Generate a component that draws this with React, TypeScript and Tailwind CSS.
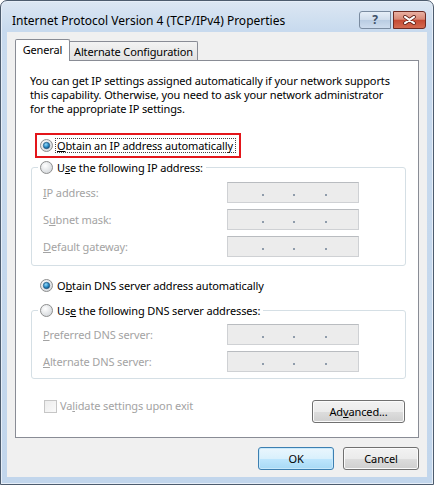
import type { ReactNode } from "react";

const font = { fontFamily: '"Noto Sans", "Open Sans", Arial, sans-serif' };

function Radio({ checked = false }: { checked?: boolean }) {
  const id = checked ? "rgOn" : "rgOff";
  return (
    <svg width="13" height="13" viewBox="0 0 13 13" className="shrink-0">
      <defs>
        <radialGradient id={id} cx="0.4" cy="0.35" r="0.75">
          <stop offset="0" stopColor="#ffffff" />
          <stop offset="1" stopColor="#cfd3d7" />
        </radialGradient>
        <radialGradient id="dot" cx="0.4" cy="0.35" r="0.7">
          <stop offset="0" stopColor="#9adaf8" />
          <stop offset="0.55" stopColor="#2b8ec8" />
          <stop offset="1" stopColor="#0d4a7a" />
        </radialGradient>
      </defs>
      <circle cx="6.5" cy="6.5" r="6" fill={`url(#${id})`} stroke="#8e8f8f" strokeWidth="1" />
      {checked && <circle cx="6.5" cy="6.5" r="3.2" fill="url(#dot)" stroke="#24557c" strokeWidth="0.7" />}
    </svg>
  );
}

function IpField() {
  return (
    <div className="flex h-[21px] w-[132px] items-end border border-[#cfd1d4] border-t-[#b9bcc0] bg-[#ececec] pb-[6px] pl-[34px]">
      <span className="h-[2px] w-[2px] bg-[#8f9cab]" />
      <span className="ml-[29px] h-[2px] w-[2px] bg-[#8f9cab]" />
      <span className="ml-[30px] h-[2px] w-[2px] bg-[#8f9cab]" />
    </div>
  );
}

function FieldRow({ label, first = false }: { label: ReactNode; first?: boolean }) {
  return (
    <div className={`flex items-center justify-between ${first ? "" : "mt-[6px]"}`}>
      <span className="text-[#a3a3a3]">{label}</span>
      <IpField />
    </div>
  );
}

function Btn({ children, primary = false, w }: { children: ReactNode; primary?: boolean; w: string }) {
  return (
    <div
      className={`flex h-[23px] ${w} items-center justify-center rounded-[3px] border ${
        primary
          ? "border-[#3c7fb1] bg-[linear-gradient(#eaf6fd_0%,#d9f0fc_50%,#bee6fd_51%,#a7d9f5_100%)] shadow-[inset_0_0_0_1px_#c8e9fb]"
          : "border-[#707070] bg-[linear-gradient(#f2f2f2_0%,#ebebeb_50%,#dddddd_51%,#cfcfcf_100%)] shadow-[inset_0_0_0_1px_#fbfbfb]"
      } text-black`}
    >
      {children}
    </div>
  );
}

export default function App() {
  return (
    <div className="h-[485px] w-[435px] bg-white text-[11px] leading-[14px] tracking-[-0.13px]" style={font}>
      <div className="flex h-[485px] w-[434px] flex-col rounded-t-[7px] border border-[#4d5c6e] bg-[linear-gradient(#dce7f3_0%,#c8daee_6%,#c2d6ec_100%)] shadow-[inset_0_0_0_1px_#e6eef8]">
        <div className="flex h-[31px] shrink-0 items-start justify-between pl-[11px] pr-[7px]">
          <span className="mt-[12px] text-[12px] leading-[15px] tracking-normal text-black">Internet Protocol Version 4 (TCP/IPv4) Properties</span>
          <div className="mt-[10px] flex">
            <div className="flex h-[18px] w-[32px] items-center justify-center rounded-l-[3px] border border-[#7a8ba0] bg-[linear-gradient(#e6eef7_0%,#cfdceb_50%,#b9cce2_51%,#cddcee_100%)] text-[12px] font-bold leading-none text-[#3e5068]">
              ?
            </div>
            <div className="ml-[2px] flex h-[18px] w-[33px] items-center justify-center rounded-r-[3px] border border-[#6e2a22] bg-[linear-gradient(#eab0a2_0%,#d88a77_45%,#c54a33_52%,#d46a50_100%)]">
              <svg width="13" height="10" viewBox="0 0 13 10">
                <path d="M2 1.8 L11 8.2 M11 1.8 L2 8.2" stroke="#5a1a12" strokeWidth="3.6" strokeLinecap="round" />
                <path d="M2 1.8 L11 8.2 M11 1.8 L2 8.2" stroke="#ffffff" strokeWidth="2.1" strokeLinecap="round" />
              </svg>
            </div>
          </div>
        </div>

        <div className="mx-[6px] mb-[7px] flex flex-1 flex-col bg-[#f0f0f0] px-[8px] pt-[7px]">
          <div className="flex h-[21px] items-end">
            <div className="relative z-10 -mb-px flex h-[22px] w-[55px] items-start justify-center rounded-t-[2px] border border-b-0 border-[#898c95] bg-white pt-[3px]">
              General
            </div>
            <div className="flex h-[19px] w-[128px] items-start justify-center whitespace-nowrap rounded-tr-[2px] border border-b-0 border-l-0 border-[#898c95] bg-[linear-gradient(#f3f3f3,#e2e2e2)] pt-[3px]">
              Alternate Configuration
            </div>
          </div>
          <div className="flex h-[378px] w-[404px] flex-col border border-[#898c95] bg-white pl-[14px] pr-[13px] pt-[13px]">
            <p className="pr-[10px] text-black">
              You can get IP settings assigned automatically if your network supports this capability. Otherwise, you need to ask your network administrator for the appropriate IP settings.
            </p>

            <div className="ml-[5px] mt-[17px] flex h-[25px] w-[206px] items-center border-2 border-[#e3151a] pl-[3px]">
              <Radio checked />
              <span className="ml-[2px] whitespace-nowrap border border-dotted border-[#444] pl-px pr-[2px] leading-[13px] text-black">
                <u>O</u>btain an IP address automatically
              </span>
            </div>

            <div className="relative ml-px mt-[9px] h-[99px] w-[375px] rounded-[3px] border border-[#d5dfe5] pl-[11px] pr-[46px] pt-[14px]">
              <div className="absolute -top-[8px] left-[6px] flex h-[15px] items-center bg-white pl-[2px] pr-[3px]">
                <Radio />
                <span className="ml-[4px] whitespace-nowrap text-black">
                  U<u>s</u>e the following IP address:
                </span>
              </div>
              <FieldRow first label={<><u>I</u>P address:</>} />
              <FieldRow label={<>S<u>u</u>bnet mask:</>} />
              <FieldRow label={<><u>D</u>efault gateway:</>} />
            </div>

            <div className="ml-[10px] mt-[12px] flex h-[15px] items-center">
              <Radio checked />
              <span className="ml-[4px] text-black">
                O<u>b</u>tain DNS server address automatically
              </span>
            </div>

            <div className="relative ml-px mt-[17px] h-[69px] w-[375px] rounded-[3px] border border-[#d5dfe5] pl-[11px] pr-[46px] pt-[13px]">
              <div className="absolute -top-[8px] left-[6px] flex h-[15px] items-center bg-white pl-[2px] pr-[3px]">
                <Radio />
                <span className="ml-[4px] whitespace-nowrap text-black">
                  Us<u>e</u> the following DNS server addresses:
                </span>
              </div>
              <FieldRow first label={<><u>P</u>referred DNS server:</>} />
              <FieldRow label={<><u>A</u>lternate DNS server:</>} />
            </div>

            <div className="mt-[20px] flex items-start justify-between pl-[14px]">
              <div className="flex h-[14px] items-center">
                <span className="h-[13px] w-[13px] border border-[#c6c6c6] bg-[linear-gradient(135deg,#ececec,#fafafa)]" />
                <span className="ml-[3px] text-[#a3a3a3]">
                  Va<u>l</u>idate settings upon exit
                </span>
              </div>
              <div className="mt-px">
                <Btn w="w-[93px]">
                  Ad<u>v</u>anced...
                </Btn>
              </div>
            </div>
          </div>

          <div className="mt-[9px] flex justify-end gap-[9px]">
            <Btn primary w="w-[76px]">OK</Btn>
            <Btn w="w-[76px]">Cancel</Btn>
          </div>
        </div>
      </div>
    </div>
  );
}
